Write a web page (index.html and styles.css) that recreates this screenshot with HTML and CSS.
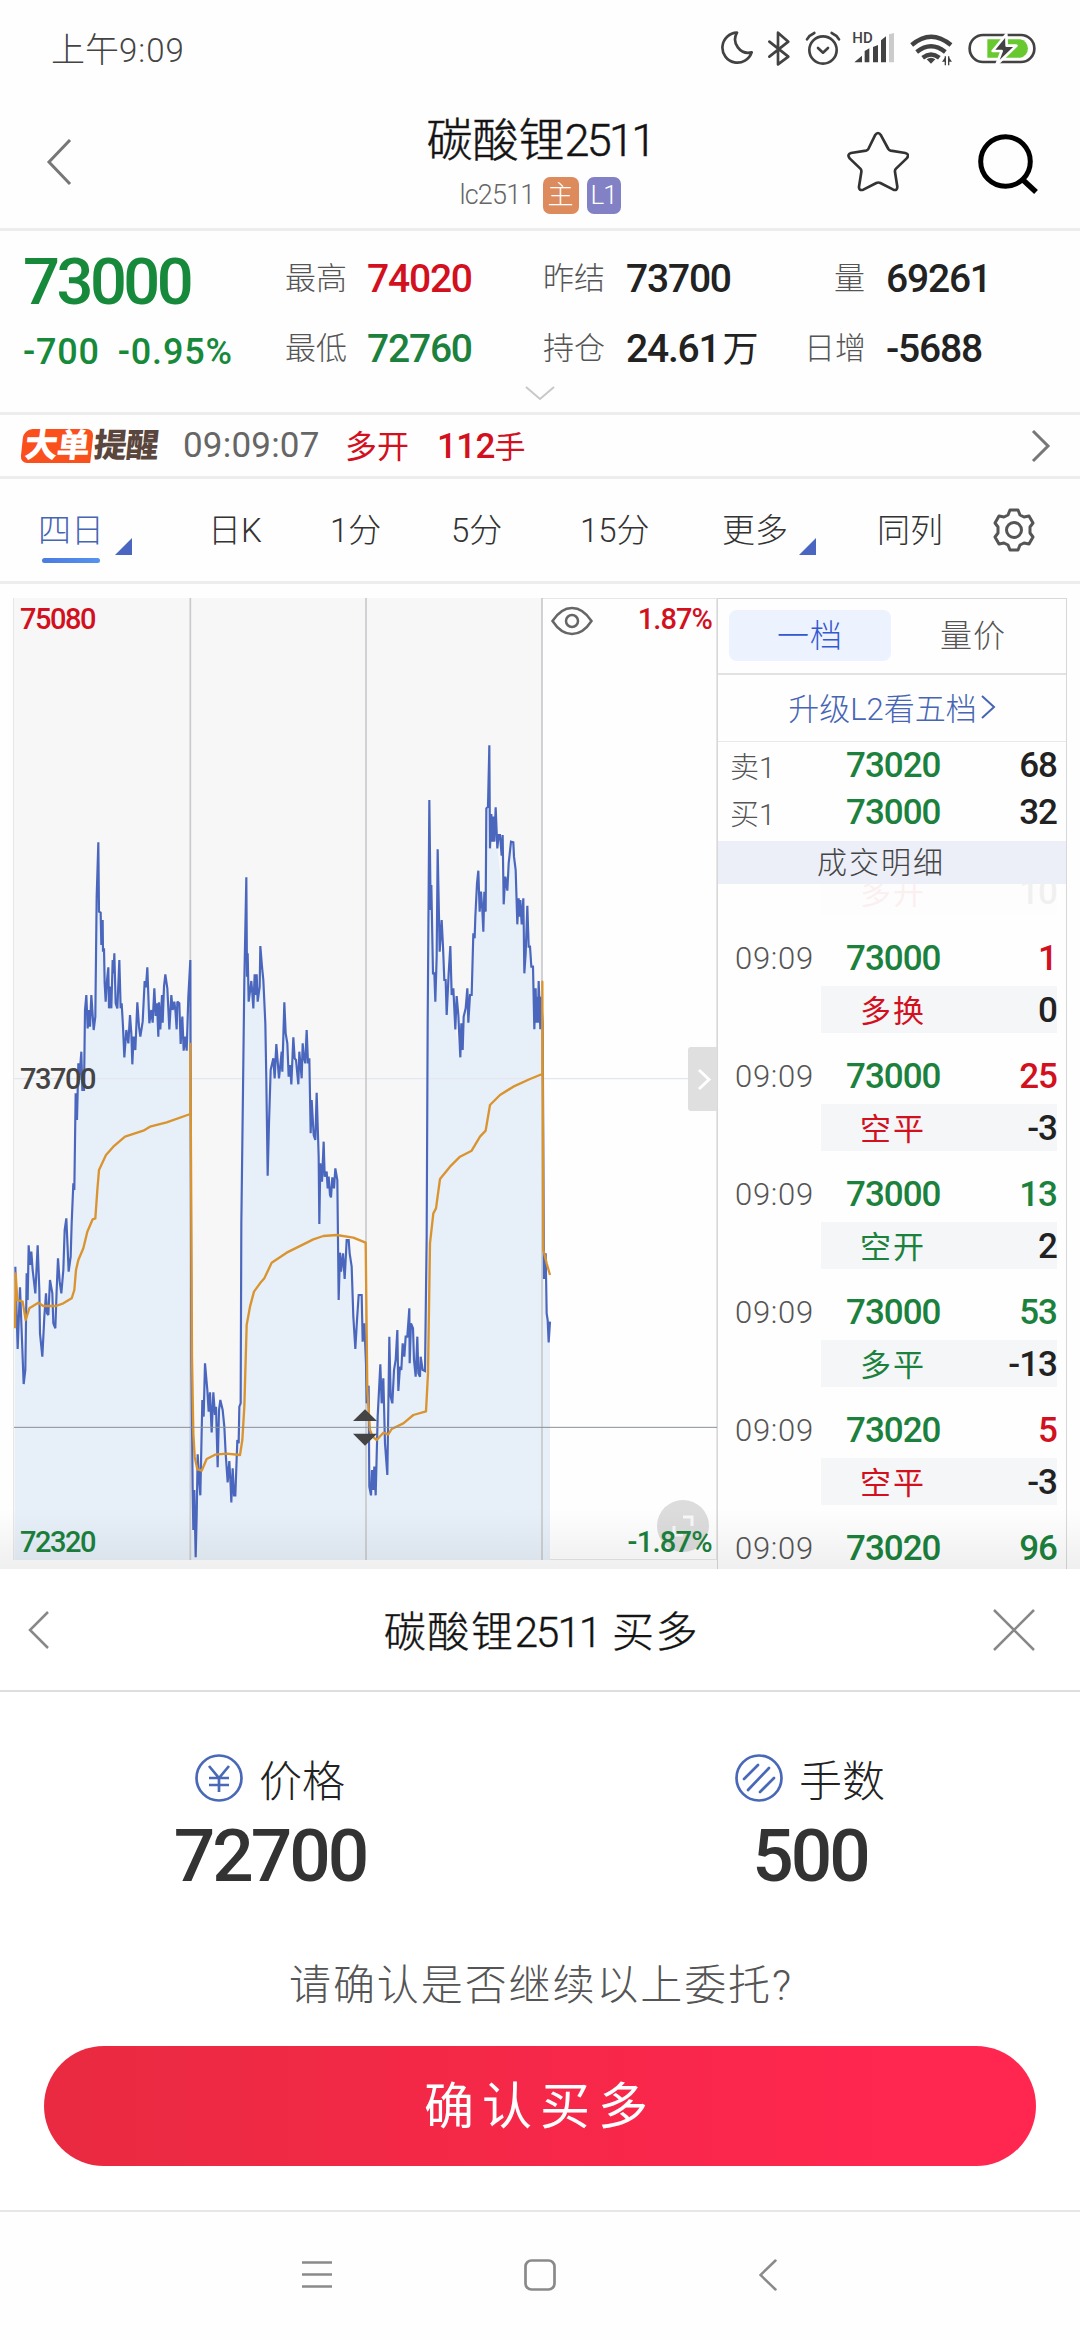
FILE: index.html
```html
<!DOCTYPE html>
<html lang="zh-CN">
<head>
<meta charset="utf-8">
<title>碳酸锂2511</title>
<link rel="stylesheet" href="styles.css">
</head>
<body>
<div class="screen">
  <div class="statusbar">
    <span class="clock">上午<span class="clock-num">9:09</span></span>
    <svg class="status-icons" width="320" height="40" viewBox="0 0 960 120" fill="none" stroke="#424242" stroke-width="8" stroke-linejoin="round" stroke-linecap="round">
      <path d="M48 17A45 45 0 1 0 92 76A40 40 0 0 1 48 17Z"/>
      <path d="M145 44L202 89L171 112V17L202 44L145 89"/>
      <circle cx="306" cy="69" r="41"/><path d="M291 63l15 14l15-14M258 37q8-13 22-19M354 37q-8-13-22-19"/>
      <text class="hd" x="394" y="49" fill="#424242" stroke="none">HD</text>
      <g fill="#424242" stroke="none"><path d="M400 106l23-20v20zM431 106V72l14-8v42zM456 106V60l15-6v52zM480 106V40l15-12v78z"/><path fill="#cbcbcb" d="M504 22l15-4v88h-15z"/></g>
      <g stroke-width="13" stroke-linecap="butt"><path d="M572 54q58-50 118 0M587 75q43-34 86 0M605 92q25-19 50 0"/></g>
      <path stroke="none" fill="#424242" d="M617 97q13-9 26 0l-13 13zM663 104l10-14v14zM683 90l10 14h-10z"/><path stroke-width="4" stroke-linecap="butt" d="M673 88v27M683 88v27"/>
      <rect x="746" y="24" width="194" height="81" rx="40"/>
      <path stroke="none" fill="#67c92f" d="M799 37h99a28 28 0 0 1 0 55h-99z"/>
      <path stroke="#fff" stroke-width="8" fill="#424242" d="M856 22l-41 50h27l-16 42l60-58h-29z"/>
    </svg>
  </div>

  <header class="header">
    <svg class="back" width="26" height="46" viewBox="0 0 26 46" fill="none" stroke="#777" stroke-width="3"><path d="M24 1L3 23L24 45"/></svg>
    <div class="title-box">
      <h1 class="title">碳酸锂<span class="title-num">2511</span></h1>
      <div class="subtitle"><span class="code">lc2511</span><span class="badge main">主</span><span class="badge level">L1</span></div>
    </div>
    <svg class="star" width="62" height="62" viewBox="0 0 186 186" fill="none" stroke="#333" stroke-width="8" stroke-linejoin="round"><path d="M84 13q9-14 18 0l22 41q2 4 7 5l44 7q14 4 4 16l-32 31q-4 4-3 10l7 44q0 13-12 9l-39-20q-6-3-12 0l-39 20q-14 4-13-9l7-44q1-6-3-10L8 82Q-1 70 12 66l45-7q5-1 7-5z"/></svg>
    <svg class="search" width="64" height="64" viewBox="0 0 64 64" fill="none" stroke="#000" stroke-width="5"><circle cx="28.500" cy="29.500" r="24.800"/><path d="M45 47L59 60" stroke-width="5.500"/></svg>
  </header>

  <section class="quote">
    <div class="last">
      <div class="last-price">73000</div>
      <div class="change"><span>-700</span><span>-0.95%</span></div>
    </div>
    <dl class="stats">
      <dt>最高</dt><dd class="up">74020</dd><dt>昨结</dt><dd>73700</dd><dt>量</dt><dd>69261</dd>
      <dt>最低</dt><dd class="down">72760</dd><dt>持仓</dt><dd>24.61<span class="wan">万</span></dd><dt>日增</dt><dd>-5688</dd>
    </dl>
    <svg class="expand" width="30" height="15" viewBox="0 0 30 15" fill="none" stroke="#c8c8c8" stroke-width="2"><path d="M1 1L15 13L29 1"/></svg>
  </section>

  <div class="alert">
    <span class="alert-logo"><b class="logo-a">大单</b><b class="logo-b">提醒</b></span>
    <span class="alert-time">09:09:07</span>
    <span class="alert-kind">多开</span>
    <span class="alert-qty">112<span class="hand">手</span></span>
    <svg class="alert-go" width="22" height="34" viewBox="0 0 22 34" fill="none" stroke="#777" stroke-width="3"><path d="M3 2L18 17L3 32"/></svg>
  </div>

  <nav class="tabs">
    <span class="tab active">四日</span><i class="corner"></i>
    <span class="tab">日K</span>
    <span class="tab">1分</span>
    <span class="tab">5分</span>
    <span class="tab">15分</span>
    <span class="tab">更多</span><i class="corner"></i>
    <span class="tab">同列</span>
    <svg class="gear" width="44" height="44" viewBox="0 0 44 44" fill="none" stroke="#555" stroke-width="3" stroke-linejoin="round"><circle cx="22" cy="22" r="7.500"/><path d="M18 2h8l2 5l4 2l5-1l4 7l-3 4v6l3 4l-4 7l-5-1l-4 2l-2 5h-8l-2-5l-4-2l-5 1l-4-7l3-4v-6l-3-4l4-7l5 1l4-2z"/></svg>
  </nav>

  <main class="market">
    <div class="chart">
      <svg class="plot" width="703" height="962" viewBox="42 24 2109 2886" fill="none">
        <path fill="#f7f7f7" d="M42 24H1627V2910H42z"/>
        <path fill="#e7eff8" d="M44 2910L46 2030 53 2277 60 2092 71 2382 80 2050 86 1966 92 1990 95 1985 106 2110 113 1966 120 2230 127 2300 138 2110 145 2175 150 2070 160 2200 166 2215 174 2005 184 2110 190 2040 199 1885 206 2045 212 2000 220 1780 223 1800 227 1510 231 1590 238 1405 244 1385 250 1505 255 1260 259 1215 265 1318 274 1215 281 1320 286 1280 290 920 295 757 298 965 302 968 305 1065 312 1100 317 1235 325 1132 329 1255 334 1255 338 1110 343 1090 352 1255 358 1110 362 1255 373 1402 381 1320 390 1275 397 1423 406 1380 412 1237 421 1340 428 1295 434 1173 442 1132 449 1300 463 1195 475 1340 486 1215 496 1153 508 1318 514 1215 530 1318 535 1235 542 1362 547 1280 551 1382 560 1382 565 1220 571 1110 576 2300 578 2700 587 2902 593 2593 601 2716 607 2430 615 2320 635 2527 640 2407 653 2632 661 2430 673 2510 683 2677 694 2737 705 2716 712 2550 718 2450 722 2300 729 1500 733 1170 739 862 745 1235 754 1173 760 1255 767 1153 773 1235 781 1068 790 1170 796 1300 799 1470 803 1757 812 1440 829 1362 837 1465 853 1237 866 1460 874 1483 880 1342 895 1483 908 1360 920 1320 928 1405 932 1630 946 1650 950 1508 956 1700 958 1902 963 1720 971 1655 983 1795 993 1822 1006 1735 1012 1770 1016 2130 1020 1988 1034 2067 1040 1950 1055 2030 1060 2180 1066 2277 1076 2115 1085 2115 1098 2320 1106 2400 1108 2690 1127 2716 1133 2480 1141 2323 1155 2560 1162 2655 1168 2240 1177 2440 1192 2220 1195 2403 1215 2240 1228 2155 1247 2360 1275 2343 1280 1940 1283 1300 1288 630 1299 1150 1306 1235 1313 778 1319 1085 1333 1150 1340 1275 1351 1068 1366 1318 1381 1402 1402 1195 1415 1215 1420 1030 1435 842 1450 1025 1458 655 1468 466 1471 775 1492 775 1511 943 1522 902 1533 755 1540 757 1552 1003 1565 1003 1573 1150 1582 947 1597 1130 1603 1318 1616 1173 1628 1300 1632 2067 1640 2170 1650 2195V2910z"/>
        <path stroke="#e4e6f2" stroke-width="4" d="M42 1466H2151"/>
        <path stroke="#c8cacc" stroke-width="5" d="M571 24V2910M1098 24V2910M1626 24V2910"/>
        <path class="price-line" d="M46 2030L53 2277 60 2092 71 2382 76 2340 80 2050 83 2130 86 1966 90 2025 94 1985 98 2040 106 2110 113 1966 118 2100 120 2230 127 2300 133 2180 138 2110 141 2170 145 2175 150 2070 157 2110 160 2200 166 2215 170 2100 174 2005 179 2075 184 2110 190 2040 194 1920 199 1885 206 2045 212 2000 215 1900 220 1780 223 1800 227 1510 231 1590 235 1420 238 1470 244 1385 247 1500 252 1500 255 1260 259 1215 263 1315 267 1260 270 1310 274 1215 281 1320 286 1280 290 920 295 757 297 965 302 968 304 1065 308 990 309 1085 312 1075 314 1180 317 1235 321 1170 325 1132 327 1255 331 1190 334 1255 338 1110 341 1150 343 1090 347 1240 352 1255 358 1110 362 1255 365 1240 369 1310 373 1402 379 1320 385 1360 390 1275 394 1330 397 1423 401 1340 406 1380 412 1237 417 1310 421 1340 428 1295 434 1173 438 1192 442 1132 448 1300 454 1260 458 1298 463 1195 467 1278 471 1240 475 1340 477 1237 481 1318 486 1215 488 1298 492 1190 496 1153 502 1195 508 1318 514 1215 518 1260 523 1235 526 1260 530 1318 532 1235 538 1240 542 1362 547 1280 551 1382 556 1340 560 1382 565 1220 571 1110 574 2300 578 2700 580 2820 583 2700 587 2902 590 2780 593 2593 598 2680 601 2716 607 2430 611 2480 615 2320 622 2400 626 2465 630 2407 635 2527 640 2407 645 2475 648 2450 653 2632 657 2460 661 2430 668 2460 673 2510 677 2590 683 2677 688 2613 691 2670 694 2737 698 2635 702 2716 706 2716 712 2550 716 2560 718 2450 722 2440 724 1900 729 1500 733 1170 739 862 741 1160 743 1090 746 1235 754 1173 757 1210 760 1255 764 1153 768 1215 770 1153 773 1235 779 1190 781 1068 786 1130 790 1170 796 1300 799 1470 803 1757 807 1600 812 1440 820 1405 824 1465 829 1362 837 1465 845 1385 847 1445 853 1237 857 1330 862 1360 866 1460 870 1425 874 1483 880 1342 884 1405 888 1410 895 1483 898 1385 905 1465 908 1360 912 1405 916 1420 920 1320 924 1420 928 1405 932 1630 935 1530 941 1635 946 1650 950 1508 956 1700 958 1902 961 1720 966 1775 971 1655 974 1760 980 1745 983 1795 986 1760 990 1815 993 1822 997 1762 1002 1795 1006 1735 1012 1770 1016 2130 1020 1988 1023 2045 1029 1990 1034 2067 1040 1950 1046 1950 1049 1990 1055 2030 1060 2180 1066 2277 1071 2190 1076 2115 1085 2115 1088 2255 1093 2200 1098 2320 1100 2440 1106 2387 1108 2690 1113 2716 1116 2640 1120 2700 1123 2630 1127 2716 1133 2480 1141 2323 1145 2440 1150 2365 1155 2560 1162 2655 1168 2240 1172 2420 1177 2440 1182 2340 1187 2310 1192 2220 1195 2403 1200 2330 1204 2340 1208 2260 1213 2300 1217 2240 1222 2240 1228 2155 1229 2320 1233 2200 1239 2215 1242 2310 1247 2360 1252 2240 1255 2350 1260 2360 1262 2300 1268 2340 1275 2343 1280 1940 1283 1300 1288 630 1292 960 1294 885 1299 1150 1303 1150 1306 1235 1310 1100 1313 778 1319 1085 1325 990 1329 1070 1333 1170 1337 1170 1340 1275 1346 1150 1351 1068 1355 1215 1360 1195 1366 1318 1370 1218 1375 1275 1381 1402 1384 1300 1388 1380 1391 1280 1397 1255 1402 1195 1405 1298 1410 1215 1415 1215 1420 1030 1424 1045 1426 980 1431 880 1435 842 1439 965 1443 905 1447 960 1450 1025 1453 905 1457 965 1459 655 1464 650 1468 466 1470 775 1474 672 1477 755 1480 680 1483 755 1487 652 1492 775 1496 735 1500 735 1505 797 1508 735 1511 943 1516 860 1522 902 1526 820 1533 755 1540 757 1542 800 1547 840 1552 1003 1556 925 1559 980 1561 930 1565 1003 1570 925 1573 1150 1577 1090 1582 947 1586 1070 1590 1070 1594 1130 1599 1130 1603 1318 1607 1195 1609 1298 1612 1220 1614 1298 1616 1173 1621 1318 1623 1220 1628 1300 1632 2067 1637 1990 1640 2170 1643 2190 1646 2257 1650 2195"/>
        <path class="avg-line" d="M45 2215L47 2050 52 2130 68 2135 77 2190 88 2155 115 2138 130 2148 168 2148 190 2140 215 2125 223 2100 228 2040 235 2010 250 1975 262 1925 278 1888 286 1885 292 1800 297 1740 318 1695 340 1670 375 1640 430 1622 450 1610 500 1597 571 1572V1362L573 1700 576 2300 580 2530 584 2600 592 2638 605 2642 620 2607 645 2594 680 2591 720 2595 727 2550 733 2450 740 2205 750 2150 762 2105 780 2080 793 2065 815 2018 860 1988 910 1963 940 1948 970 1938 1010 1935 1060 1943 1097 1958 1102 2400 1110 2520 1118 2540 1130 2550 1150 2528 1165 2533 1175 2517 1210 2500 1240 2475 1278 2464 1284 2350 1290 1960 1300 1870 1308 1855 1320 1767 1350 1730 1380 1700 1415 1682 1440 1640 1457 1622 1470 1545 1500 1515 1540 1490 1590 1467 1627 1452V1175L1630 1980 1640 2020 1650 2055"/>
        <path stroke="#8b8f94" stroke-width="3" d="M42 2512H2151"/>
        <path fill="#444" d="M1059 2493l36-35l36 35zM1059 2531l36 36l36-36z"/>
      </svg>
      <span class="axis top-left up">75080</span>
      <span class="axis top-right up">1.87%</span>
      <span class="axis mid-left">73700</span>
      <svg class="fullscreen" width="54" height="54" viewBox="0 0 54 54" fill="none" stroke="#f8f8f8" stroke-width="3"><circle cx="27" cy="27" r="26" fill="#dcdcdc" stroke="none"/><path d="M27 18h9v9M18 27v9h9"/></svg>
      <span class="axis bottom-left down">72320</span>
      <span class="axis bottom-right down">-1.87%</span>
      <svg class="eye" width="42" height="30" viewBox="0 0 42 30" fill="none" stroke="#666" stroke-width="2.500"><path d="M1.500 15Q10 2 21 2T40.500 15Q32 28 21 28T1.500 15Z"/><circle cx="21" cy="15" r="6"/></svg>
      <svg class="side-handle" width="29" height="64" viewBox="0 0 29 64" fill="none"><path fill="#dfdfdf" d="M3 0H29V64H3Q0 64 0 61V3Q0 0 3 0Z"/><path stroke="#fff" stroke-width="3" d="M11 23L21 32.500L11 42"/></svg>
    </div>

    <aside class="book">
      <div class="book-tabs"><span class="book-tab on">一档</span><span class="book-tab">量价</span></div>
      <div class="upgrade">升级L2看五档<svg width="15" height="24" viewBox="0 0 15 24" fill="none" stroke="#4765b5" stroke-width="2"><path d="M1 1L13 12L1 23"/></svg></div>
      <div class="level-row"><span class="side">卖1</span><b class="down">73020</b><b>68</b></div>
      <div class="level-row"><span class="side">买1</span><b class="down">73000</b><b>32</b></div>
      <div class="detail-title">成交明细</div>
      <div class="trades">
        <div class="trade fading"><div class="deal"><span class="up">多开</span><b>10</b></div></div>
        <div class="trade"><div class="tick"><span>09:09</span><b class="down">73000</b><b class="up">1</b></div><div class="deal"><span class="up">多换</span><b>0</b></div></div>
        <div class="trade"><div class="tick"><span>09:09</span><b class="down">73000</b><b class="up">25</b></div><div class="deal"><span class="up">空平</span><b>-3</b></div></div>
        <div class="trade"><div class="tick"><span>09:09</span><b class="down">73000</b><b class="down">13</b></div><div class="deal"><span class="down">空开</span><b>2</b></div></div>
        <div class="trade"><div class="tick"><span>09:09</span><b class="down">73000</b><b class="down">53</b></div><div class="deal"><span class="down">多平</span><b>-13</b></div></div>
        <div class="trade"><div class="tick"><span>09:09</span><b class="down">73020</b><b class="up">5</b></div><div class="deal"><span class="up">空平</span><b>-3</b></div></div>
        <div class="trade"><div class="tick"><span>09:09</span><b class="down">73020</b><b class="down">96</b></div></div>
      </div>
    </aside>
    <div class="shade"></div>
  </main>

  <section class="sheet">
    <div class="sheet-head">
      <svg width="22" height="38" viewBox="0 0 22 38" fill="none" stroke="#888" stroke-width="2.500"><path d="M20 1L2 19L20 37"/></svg>
      <h2 class="sheet-title">碳酸锂<span class="sheet-num">2511</span> 买多</h2>
      <svg width="42" height="42" viewBox="0 0 42 42" fill="none" stroke="#888" stroke-width="2.500"><path d="M1 1L41 41M41 1L1 41"/></svg>
    </div>
    <div class="order">
      <div class="field">
        <div class="field-name"><svg width="48" height="48" viewBox="0 0 48 48" fill="none" stroke="#4a68b8" stroke-width="2.700"><circle cx="24" cy="24" r="22.500"/><path d="M14 12L24 24L34 12M14 24H34M14 31H34M24 24V38"/></svg>价格</div>
        <div class="field-value">72700</div>
      </div>
      <div class="field">
        <div class="field-name"><svg width="48" height="48" viewBox="0 0 48 48" fill="none" stroke="#4a68b8" stroke-width="2.700" stroke-linecap="round"><circle cx="24" cy="24" r="22.500"/><path d="M9 25L23 11M13 36L34 14M25 38L39 24"/></svg>手数</div>
        <div class="field-value">500</div>
      </div>
    </div>
    <p class="question">请确认是否继续以上委托?</p>
    <button class="confirm">确认买多</button>
  </section>

  <footer class="navbar">
    <svg width="30" height="30" viewBox="0 0 30 30" stroke="#8a8a8a" stroke-width="2.500"><path d="M0 2.500H30M0 14.500H30M0 26.500H30"/></svg>
    <svg width="32" height="32" viewBox="0 0 32 32" fill="none" stroke="#8a8a8a" stroke-width="2.700"><rect x="1.500" y="1.500" width="29" height="29" rx="6"/></svg>
    <svg width="18" height="32" viewBox="0 0 18 32" fill="none" stroke="#8a8a8a" stroke-width="2.500" stroke-linecap="round"><path d="M16.500 1.500L1.500 16L16.500 30.500"/></svg>
  </footer>
</div>
</body>
</html>
```
FILE: styles.css
```css
* { box-sizing: border-box; margin: 0; padding: 0; }
body { background: #fff; font-family: Roboto, "Noto Sans CJK SC", sans-serif; font-weight: 300; color: #222; }
svg { display: block; flex: none; }
.screen { width: 1080px; height: 2340px; overflow: hidden; display: flex; flex-direction: column; background: #fefefe; white-space: nowrap; }
.up { color: #d2101e; }
.down { color: #1b813c; }

.statusbar { height: 96px; padding: 0 39px 2px 51px; display: flex; align-items: center; justify-content: space-between; }
.clock { font-size: 34px; color: #444; }
.clock-num { font-size: 33px; letter-spacing: 1px; }
.status-icons { width: 320px; }
.hd { font: 500 45px Roboto, sans-serif; }

.header { height: 135px; border-bottom: 3px solid #ededed; display: grid; grid-template-columns: 46px 801px 111px 70px; align-items: start; }
.back { grid-row: 1; grid-column: 1; margin: 43px 0 0 46px; }
.title-box { grid-row: 1; grid-column: 2; width: 1080px; margin-left: -46px; padding-top: 16px; text-align: center; }
.title { font-weight: 300; font-size: 46px; line-height: 56px; color: #111; -webkit-text-stroke: .5px #222; }
.title-num { font-size: 45px; letter-spacing: -2.700px; }
.star { grid-row: 1; grid-column: 3; margin-top: 35px; }
.search { grid-row: 1; grid-column: 4; margin: 36px 0 0 19px; }
.subtitle { display: flex; justify-content: center; align-items: center; margin-top: 7px; height: 38px; }
.code { font-size: 27px; color: #666; letter-spacing: -.8px; margin-right: 8px; }
.badge { height: 37px; width: 36px; border-radius: 7px; color: #fff; font-size: 26px; line-height: 37px; text-align: center; }
.main { background: #dd8a5c; margin-right: 8px; }
.level { background: #8281c6; width: 34px; letter-spacing: -1px; }

.quote { height: 184px; border-bottom: 3px solid #ededed; position: relative; display: flex; }
.last { width: 285px; padding: 18px 0 0 23px; color: #17893b; }
.last-price { font-size: 65px; line-height: 66px; font-weight: 500; letter-spacing: -3.500px; }
.change { font-size: 36px; line-height: 48px; font-weight: 500; margin-top: 13px; display: flex; gap: 18px; letter-spacing: .8px; }
.stats { display: grid; grid-template-columns: 82px 176px 83px 178px 82px 120px; grid-template-rows: 70px 70px; margin-top: 13px; }
.stats dt { font-size: 31px; line-height: 70px; color: #555; }
.stats dt:nth-of-type(3n) { width: 61px; text-align: right; }
.stats dd { font-size: 39px; line-height: 70px; font-weight: 500; letter-spacing: -1.200px; }
.wan { font-size: 36px; font-weight: 400; margin-left: 3px; }
.expand { position: absolute; left: 525px; top: 155px; }

.alert { height: 64px; padding: 0 28px 0 22px; border-bottom: 3px solid #ededed; display: flex; align-items: center; }
.alert-logo { display: flex; width: 161px; font-size: 33px; line-height: 33px; transform: skewX(-6deg); letter-spacing: -1px; }
.alert-logo b { font-weight: 900; }
.logo-a { background: #f9501e; color: #fff; width: 70px; height: 34px; border-radius: 9px 7px 0 7px; padding-left: 3px; }
.logo-b { color: #5a463c; padding-left: 2px; }
.alert-time { font-size: 35px; font-weight: 400; color: #666; width: 162px; letter-spacing: .2px; }
.alert-kind { font-size: 32px; font-weight: 400; color: #d2101e; width: 92px; padding-bottom: 3px; }
.alert-qty { font-size: 35px; font-weight: 500; color: #d2101e; letter-spacing: -.7px; padding-bottom: 3px; }
.hand { font-size: 31px; font-weight: 400; }
.alert-go { margin-left: auto; }

.tabs { height: 105px; padding-left: 38px; border-bottom: 3px solid #ededed; display: grid; grid-template-columns: 77px 93px 122px 121px 129px 142px 77px 78px 115px 44px; font-size: 33px; align-items: center; color: #333; }
.tab { height: 102px; line-height: 104px; position: relative; }
.active { color: #4765b5; }
.active::after { content: ""; position: absolute; left: 4px; top: 79px; width: 58px; height: 5px; border-radius: 3px; background: linear-gradient(90deg, #4b7be0, #5592ee); }
.corner { border-style: solid; border-width: 0 0 17px 17px; border-color: transparent transparent #4a66c0; width: 0; margin-top: 32px; }

.market { height: 985px; padding: 14px 13px 0; display: flex; position: relative; overflow: hidden; }
.chart { width: 704px; height: 962px; border: 1px solid #e6e6e6; position: relative; }
.plot { margin: -1px 0 0; }
.price-line { stroke: #4a67bd; stroke-width: 6.500; stroke-linejoin: miter; stroke-miterlimit: 2; }
.avg-line { stroke: #d9942f; stroke-width: 7; stroke-linejoin: round; }
.axis { position: absolute; font-size: 29px; line-height: 34px; font-weight: 500; letter-spacing: -1.500px; }
.top-left { left: 6px; top: 3px; }
.top-right { right: 4px; top: 3px; letter-spacing: -.9px; }
.mid-left { left: 6px; top: 463px; color: #444; }
.bottom-left { left: 6px; bottom: 0; }
.bottom-right { right: 4px; bottom: 0; letter-spacing: -.7px; }
.eye { position: absolute; left: 537px; top: 7px; }
.side-handle { position: absolute; right: -1px; top: 448px; }
.fullscreen { position: absolute; left: 642px; bottom: 6px; }

.book { width: 350px; flex: none; height: 985px; border: 1px solid #d8d8d8; border-width: 1px 1px 0; }
.book-tabs { height: 76px; border-bottom: 2px solid #e2e2e2; display: flex; padding: 11px 0 0 11px; }
.book-tab { width: 162px; height: 51px; line-height: 53px; text-align: center; font-size: 32px; letter-spacing: 1px; color: #555; border-radius: 8px; margin-right: 1px; }
.on { background: #edf2ff; color: #3358d0; }
.upgrade { height: 67px; border-bottom: 1px solid #e8e8e8; display: flex; align-items: center; justify-content: center; gap: 4px; font-size: 31px; padding-bottom: 3px; color: #4765b5; }
.level-row { height: 47px; padding: 0 9px 0 12px; display: grid; grid-template-columns: 106px 110px 1fr; align-items: center; }
.level-row .side { font-size: 29px; color: #555; padding-bottom: 2px; }
.book b { font-weight: 500; font-size: 35px; letter-spacing: -1px; }
.level-row b { padding-left: 10px; }
.level-row b:last-child, .tick b:last-child { text-align: right; }
.detail-title { height: 43px; margin-top: 5px; line-height: 44px; background: #eceff8; color: #444; font-size: 30px; letter-spacing: 2px; padding-left: 99px; }
.trades { overflow: hidden; height: 685px; }
.trade { height: 118px; }
.fading { height: 60px; margin-top: -16px; opacity: .06; }
.tick { height: 60px; margin-bottom: -2px; padding: 0 9px 0 17px; display: grid; grid-template-columns: 111px 110px 1fr; align-items: center; color: #555; font-size: 31px; letter-spacing: .7px; }
.deal { margin: 0 9px 0 103px; height: 47px; padding: 0 0 0 39px; background: #f5f6f8; display: flex; align-items: center; justify-content: space-between; font-size: 31px; }
.deal b { margin-top: 2px; }
.deal span { font-weight: 400; letter-spacing: 2px; padding-bottom: 3px; }
.shade { position: absolute; left: 0; right: 0; bottom: 0; height: 60px; background: linear-gradient(rgba(0,0,0,0), rgba(0,0,0,.06)); }

.sheet { height: 641px; background: #fff; display: flex; flex-direction: column; }
.sheet-head { height: 123px; border-bottom: 2px solid #dedede; padding: 0 45px 0 28px; display: grid; grid-template-columns: 22px 1fr 42px; align-items: center; }
.sheet-title { font-weight: 300; font-size: 42px; color: #111; letter-spacing: 1.700px; padding: 0 0 3px 40px; text-align: center; -webkit-text-stroke: .4px #222; }
.sheet-num { letter-spacing: -2px; }
.order { display: grid; grid-template-columns: 1fr 1fr; padding-top: 56px; }
.field { text-align: center; }
.field-name { height: 60px; display: flex; align-items: center; justify-content: center; gap: 16px; font-size: 43px; color: #222; padding-bottom: 1px; }
.field-value { font-size: 73px; line-height: 86px; font-weight: 500; color: #333; letter-spacing: -3px; margin-top: 5px; }
.question { font-size: 42px; line-height: 60px; letter-spacing: 1.900px; color: #555; text-align: center; margin-top: 57px; padding-left: 2px; }
.confirm { width: 992px; height: 120px; margin: 30px 44px 0; border: 0; border-radius: 60px; background: linear-gradient(90deg, #e92a40, #ff264f 85%); color: #fff; font: 400 50px "Noto Sans CJK SC", sans-serif; letter-spacing: 8px; padding-bottom: 8px; }

.navbar { height: 130px; border-top: 2px solid #e6e6e6; display: grid; grid-template-columns: 222px 235px 18px; align-items: center; padding: 0 0 2px 302px; }
```
